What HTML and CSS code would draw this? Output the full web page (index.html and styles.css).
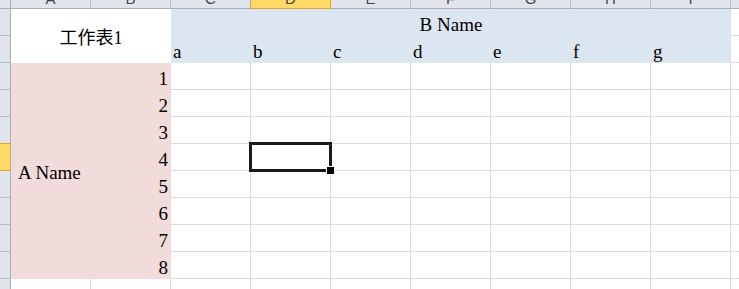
FILE: index.html
```html
<!DOCTYPE html>
<html lang="zh-Hant">
<head>
  <meta charset="UTF-8" />
  <title>工作表1</title>
  <link rel="stylesheet" href="styles.css">
</head>
<body>
  <div class="sheet">
    <div class="corner"></div>

    <div class="col-heads">
      <div class="col-head"><span>A</span></div>
      <div class="col-head"><span>B</span></div>
      <div class="col-head"><span>C</span></div>
      <div class="col-head active"><span>D</span></div>
      <div class="col-head"><span>E</span></div>
      <div class="col-head"><span>F</span></div>
      <div class="col-head"><span>G</span></div>
      <div class="col-head"><span>H</span></div>
      <div class="col-head"><span>I</span></div>
      <div class="col-head"><span>J</span></div>
    </div>

    <div class="row-heads">
      <div class="row-head"></div>
      <div class="row-head"></div>
      <div class="row-head"></div>
      <div class="row-head"></div>
      <div class="row-head"></div>
      <div class="row-head active"></div>
      <div class="row-head"></div>
      <div class="row-head"></div>
      <div class="row-head"></div>
      <div class="row-head"></div>
      <div class="row-head"></div>
    </div>

    <div class="cells">
      <div class="cell title">工作表1</div>
      <div class="cell group-b">B Name</div>
      <div class="cell sub">a</div>
      <div class="cell sub">b</div>
      <div class="cell sub">c</div>
      <div class="cell sub">d</div>
      <div class="cell sub">e</div>
      <div class="cell sub">f</div>
      <div class="cell sub">g</div>
      <div class="cell group-a">A Name</div>
      <div class="cell num">1</div>
      <div class="cell num">2</div>
      <div class="cell num">3</div>
      <div class="cell num">4</div>
      <div class="cell num">5</div>
      <div class="cell num">6</div>
      <div class="cell num">7</div>
      <div class="cell num">8</div>
      <div class="cell selected"></div>
    </div>
  </div>
</body>
</html>
```

FILE: styles.css
```css
* { box-sizing: border-box; }
body {
  margin: 0;
  overflow: hidden;
  background: #fff;
  font-family: "Liberation Serif", "Noto Sans CJK TC", serif;
  color: #000;
}

.sheet {
  display: grid;
  grid-template-columns: 11px 1fr;
  grid-template-rows: 9px 1fr;
  width: 739px;
  height: 289px;
  overflow: hidden;
}

/* headers */
.corner {
  background: #e1e5eb;
  border-right: 1px solid #a9aeb6;
  border-bottom: 1px solid #a9aeb6;
}
.col-heads { display: flex; overflow: hidden; }
.col-head {
  flex: 0 0 80px;
  height: 9px;
  display: flex;
  justify-content: center;
  overflow: hidden;
  background: #e1e5eb;
  border-right: 1px solid #b9bec6;
  border-bottom: 1px solid #a9aeb6;
  font: 15px/14px "Liberation Sans", sans-serif;
  color: #3f4650;
}
.col-head span { margin-top: -8px; }
.col-head.active {
  background: #ffd966;
  border-color: #e2a33c;
  box-shadow: -1px 0 0 #e2a33c;
}

.row-heads {
  display: flex;
  flex-direction: column;
  overflow: hidden;
  border-right: 1px solid #a9aeb6;
}
.row-head {
  flex: 0 0 27px;
  background: #e1e5eb;
  border-bottom: 1px solid #b9bec6;
}
.row-head.active {
  background: #ffd966;
  border-bottom-color: #e2a33c;
  box-shadow: 0 -1px 0 #e2a33c;
}

/* cell area */
.cells {
  display: grid;
  grid-template-columns: repeat(10, 80px);
  grid-template-rows: repeat(11, 27px);
  min-width: 0;
  background-color: #fff;
  background-image:
    linear-gradient(to right, transparent 79px, #dadada 79px),
    linear-gradient(to bottom, transparent 26px, #dadada 26px);
  background-size: 80px 100%, 100% 27px;
  font-size: 19px;
}
.cell {
  display: flex;
  align-items: flex-end;
  padding: 0 2px 2px;
  line-height: 19px;
  white-space: nowrap;
}
.title {
  grid-column: 1 / 3;
  grid-row: 1 / 3;
  align-items: center;
  justify-content: center;
  padding: 5px 0 0;
  background: #fff;
  font-size: 18px;
}
.group-b {
  grid-column: 3 / 10;
  grid-row: 1;
  justify-content: center;
  background: #dce6f1;
}
.sub { grid-row: 2; background: #dce6f1; }
.group-a {
  grid-column: 1;
  grid-row: 3 / 11;
  align-items: center;
  padding: 3px 0 0 7px;
  background: #f2dcdb;
}
.num {
  grid-column: 2;
  justify-content: flex-end;
  padding-right: 3px;
  background: #f2dcdb;
}

.selected { grid-column: 4; grid-row: 6; position: relative; }
.selected::before {
  content: "";
  position: absolute;
  left: -2px; top: -2px; right: -1px; bottom: -1px;
  border: 3px solid #1a1a1a;
}
.selected::after {
  content: "";
  position: absolute;
  right: -4px; bottom: -4px;
  width: 7px; height: 7px;
  background: #000;
  border: 1px solid #fff;
}
```
